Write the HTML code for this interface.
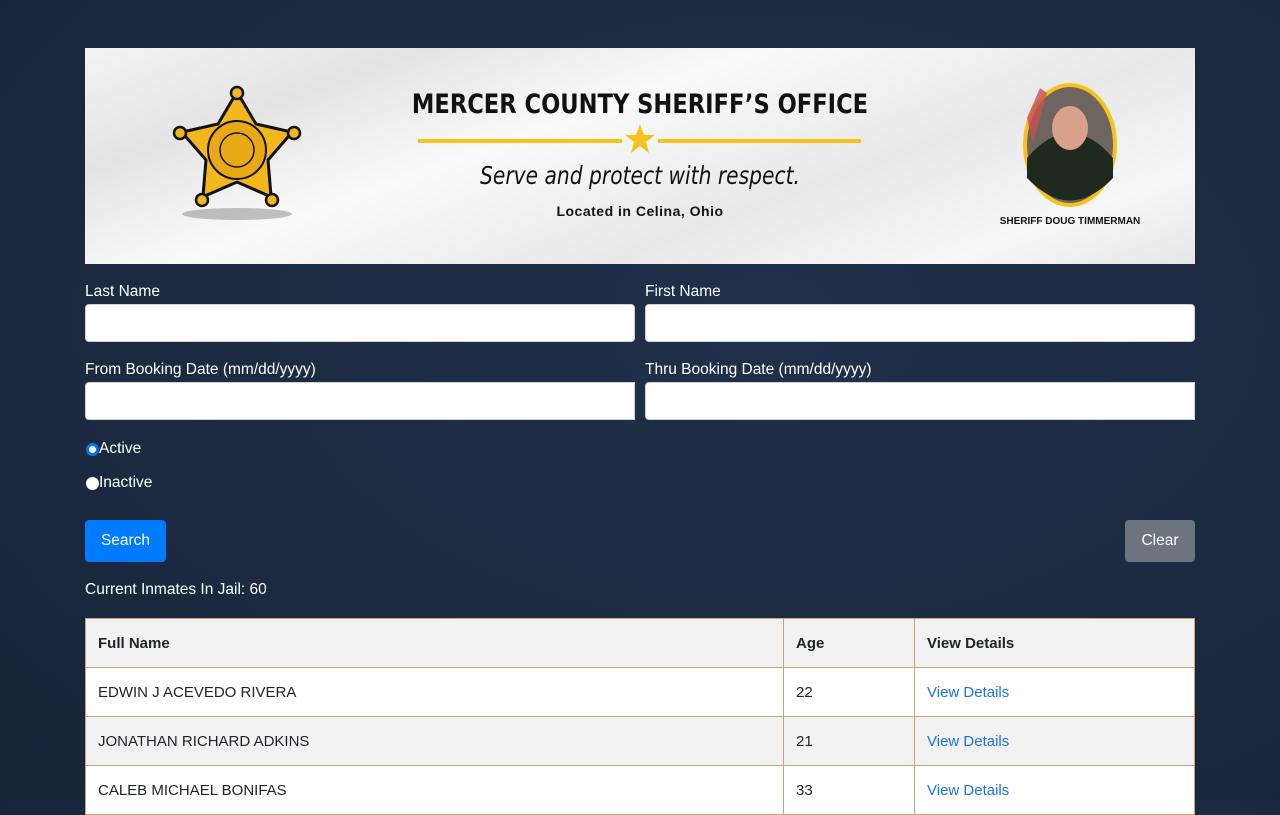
<!DOCTYPE html>
<html><head><meta charset="utf-8"><style>
*{box-sizing:border-box}
html,body{margin:0;width:1280px;height:800px;overflow:hidden}
body{background:radial-gradient(ellipse at 60% 40%,#20304a 0%,#1b2a40 60%,#172438 100%);font-family:"Liberation Sans","DejaVu Sans",sans-serif;color:#fff;font-size:15.5px}
.banner{position:absolute;left:85px;top:48px;width:1110px;height:216px;background:linear-gradient(160deg,#f3f3f3 0%,#e4e4e4 20%,#fafafa 40%,#e8e8e8 65%,#f7f7f7 85%,#e6e6e6 100%);overflow:hidden}
.lbl{position:absolute;font-size:15.5px}
.inp{position:absolute;height:38px;background:#fff;border:1px solid #ced4da;border-radius:4px}
.radio{position:absolute;left:86px;display:flex;align-items:center;font-size:15.5px}
.radio span.c{width:13px;height:13px;border-radius:50%;background:#fff;display:inline-block}
.btn{position:absolute;height:42px;border-radius:4px;color:#fff;font-size:15.5px;display:flex;align-items:center;justify-content:center}
table{position:absolute;left:85px;top:618px;width:1110px;border-collapse:collapse;color:#212529;font-size:15px}
td,th{border:1px solid #c9a378;height:49px;padding:0 12px;text-align:left}
th{background:#f2f2f2;font-weight:bold}
tr.o td{background:#fff}tr.e td{background:#f2f2f2}
a{color:#1a73e8;text-decoration:none}
</style></head><body>
<div class="banner">
<svg width="1110" height="216" style="position:absolute;left:0;top:0">
<ellipse cx="152" cy="166" rx="55" ry="6" fill="#555" opacity=".35"/>
<g transform="translate(-85,-48)">
<polygon points="237,92 256,124 292.2,132.1 268,160 271.1,196.9 237,182 202.9,196.9 206,160 181.8,132.1 218,124" fill="#f2b71c" stroke="#111" stroke-width="3" stroke-linejoin="round"/>
<circle cx="237" cy="93" r="6" fill="#f2b71c" stroke="#111" stroke-width="2.5"/>
<circle cx="294" cy="133" r="6" fill="#f2b71c" stroke="#111" stroke-width="2.5"/>
<circle cx="180" cy="133" r="6" fill="#f2b71c" stroke="#111" stroke-width="2.5"/>
<circle cx="272" cy="200" r="6" fill="#f2b71c" stroke="#111" stroke-width="2.5"/>
<circle cx="202" cy="200" r="6" fill="#f2b71c" stroke="#111" stroke-width="2.5"/>
<circle cx="237" cy="150" r="29" fill="#e8a915" stroke="#111" stroke-width="2"/>
<circle cx="237" cy="150" r="17" fill="none" stroke="#111" stroke-width="1.5"/>
</g>
<line x1="333" y1="93" x2="537" y2="93" stroke="#f5c31c" stroke-width="4"/>
<line x1="573" y1="93" x2="776" y2="93" stroke="#f5c31c" stroke-width="4"/>
<polygon points="555,76 559,87 570,87 561,94 564,105 555,98 546,105 549,94 540,87 551,87" fill="#f5c31c"/>
<ellipse cx="985" cy="97" rx="47" ry="62" fill="#f5c31c"/>
<ellipse cx="985" cy="97" rx="43" ry="58" fill="#6e6460"/>
<path d="M942,110 Q985,60 1028,110 L1028,130 Q985,175 942,130Z" fill="#1e2a1e"/>
<ellipse cx="985" cy="80" rx="18" ry="22" fill="#d9a08a"/>
<path d="M942,70 L955,40 L962,45 L948,95Z" fill="#c95050" opacity=".8"/>
</svg>
<div style="position:absolute;left:0;width:1110px;top:41px;text-align:center;color:#111;font-family:'DejaVu Sans Condensed','Liberation Sans Narrow','Liberation Sans',sans-serif;font-weight:bold;font-size:27px;transform:scaleX(.93)">MERCER COUNTY SHERIFF’S OFFICE</div>
<div style="position:absolute;left:0;width:1110px;top:113px;text-align:center;color:#111;font-style:italic;font-size:25px;font-family:'DejaVu Sans Condensed','Liberation Sans Narrow',sans-serif;transform:scaleX(.9)">Serve and protect with respect.</div>
<div style="position:absolute;left:0;width:1110px;top:155px;text-align:center;color:#111;font-weight:bold;font-size:14px;letter-spacing:.5px">Located in Celina, Ohio</div>
<div style="position:absolute;left:900px;width:170px;top:168px;text-align:center;color:#111;font-weight:bold;font-size:10px">SHERIFF DOUG TIMMERMAN</div>
</div>
<div class="lbl" style="left:85px;top:283px">Last Name</div>
<div class="lbl" style="left:645px;top:283px">First Name</div>
<div class="inp" style="left:85px;top:304px;width:550px"></div>
<div class="inp" style="left:645px;top:304px;width:550px"></div>
<div class="lbl" style="left:85px;top:361px">From Booking Date (mm/dd/yyyy)</div>
<div class="lbl" style="left:645px;top:361px">Thru Booking Date (mm/dd/yyyy)</div>
<div class="inp" style="left:85px;top:382px;width:550px;border-radius:4px 0 0 4px"></div>
<div class="inp" style="left:645px;top:382px;width:550px;border-radius:4px 0 0 4px"></div>
<div class="radio" style="top:440px"><span class="c" style="border:3px solid #0a75e8;background:#fff"></span>Active</div>
<div class="radio" style="top:474px"><span class="c"></span>Inactive</div>
<div class="btn" style="left:85px;top:520px;width:81px;background:#007bff">Search</div>
<div class="btn" style="left:1125px;top:520px;width:70px;background:#6c757d">Clear</div>
<div class="lbl" style="left:85px;top:581px">Current Inmates In Jail: 60</div>
<table>
<tr><th style="width:698px">Full Name</th><th style="width:131px">Age</th><th>View Details</th></tr>
<tr class="o"><td>EDWIN J ACEVEDO RIVERA</td><td>22</td><td><a>View Details</a></td></tr>
<tr class="e"><td>JONATHAN RICHARD ADKINS</td><td>21</td><td><a>View Details</a></td></tr>
<tr class="o"><td>CALEB MICHAEL BONIFAS</td><td>33</td><td><a>View Details</a></td></tr>
</table>
</body></html>
